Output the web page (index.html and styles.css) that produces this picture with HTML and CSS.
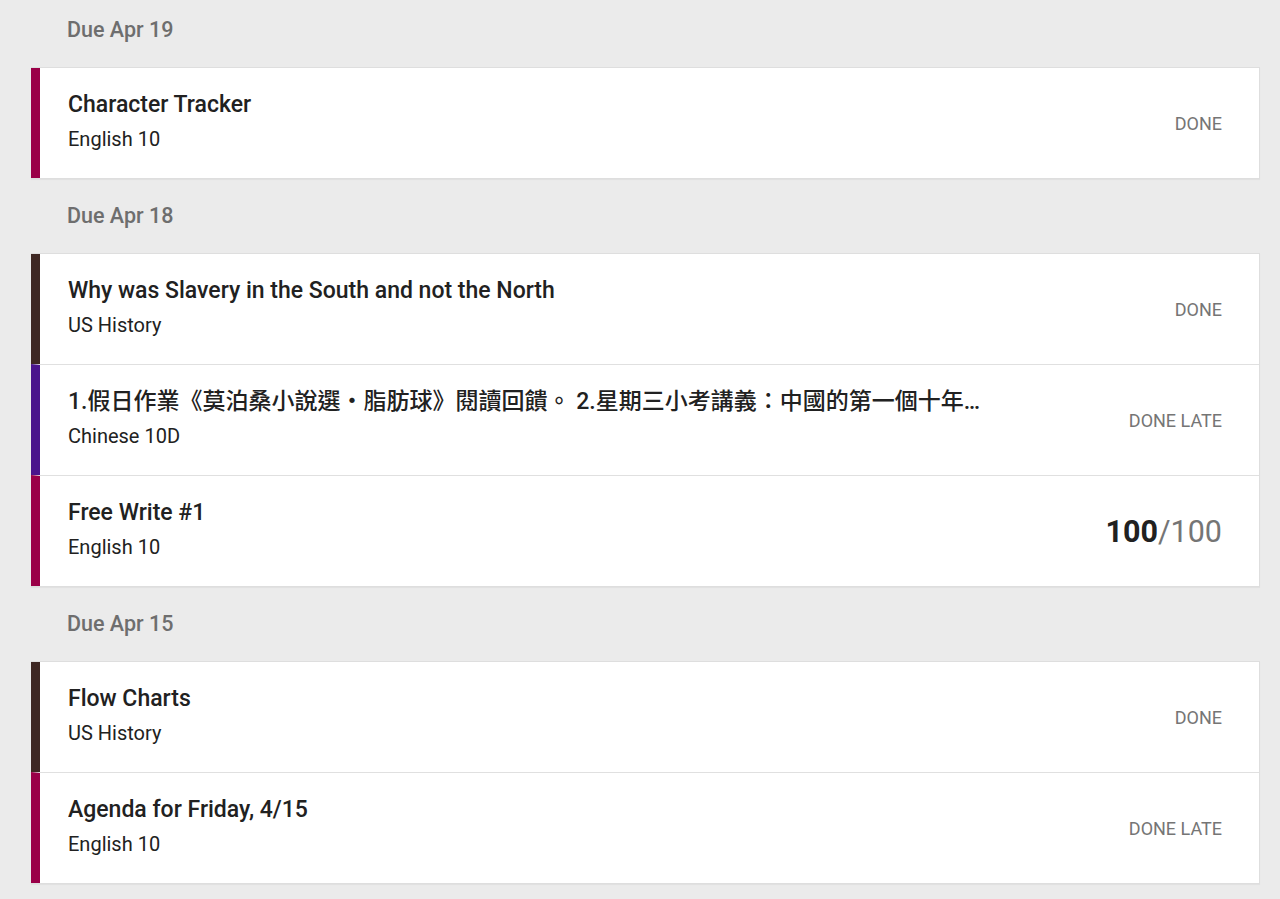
FILE: index.html
```html
<!DOCTYPE html>
<html lang="en">
<head>
<meta charset="utf-8">
<title>Assignments</title>
<link rel="stylesheet" href="styles.css">
</head>
<body>
<main class="page">
  <section class="group">
    <h2 class="day-header">Due Apr 19</h2>
    <div class="card">
      <div class="row english">
        <div class="info">
          <div class="title">Character Tracker</div>
          <div class="course">English 10</div>
        </div>
        <div class="status">DONE</div>
      </div>
    </div>
  </section>

  <section class="group">
    <h2 class="day-header">Due Apr 18</h2>
    <div class="card">
      <div class="row history">
        <div class="info">
          <div class="title">Why was Slavery in the South and not the North</div>
          <div class="course">US History</div>
        </div>
        <div class="status">DONE</div>
      </div>
      <div class="row chinese">
        <div class="info">
          <div class="title cjk">1.假日作業《莫泊桑小說選・脂肪球》閱讀回饋。 2.星期三小考講義：中國的第一個十年…</div>
          <div class="course">Chinese 10D</div>
        </div>
        <div class="status">DONE LATE</div>
      </div>
      <div class="row english">
        <div class="info">
          <div class="title">Free Write #1</div>
          <div class="course">English 10</div>
        </div>
        <div class="score"><span class="score-got">100</span>/100</div>
      </div>
    </div>
  </section>

  <section class="group">
    <h2 class="day-header">Due Apr 15</h2>
    <div class="card">
      <div class="row history">
        <div class="info">
          <div class="title">Flow Charts</div>
          <div class="course">US History</div>
        </div>
        <div class="status">DONE</div>
      </div>
      <div class="row english">
        <div class="info">
          <div class="title">Agenda for Friday, 4/15</div>
          <div class="course">English 10</div>
        </div>
        <div class="status">DONE LATE</div>
      </div>
    </div>
  </section>
</main>
</body>
</html>
```

FILE: styles.css
```css
html, body {
  margin: 0;
  padding: 0;
  background: #ebebeb;
}

body {
  font-family: Roboto, "Noto Sans CJK TC", "Liberation Sans", sans-serif;
  color: #212121;
  height: 899px;
  overflow: hidden;
}

.page {
  display: flex;
  flex-direction: column;
  padding: 0 20px 0 31px;
}

.day-header {
  margin: 0;
  padding: 25px 0 25px 36px;
  font-size: 21.5px;
  line-height: 24px;
  font-weight: 500;
  color: #6e6e6e;
}

.group:first-child .day-header {
  padding-top: 18px;
  padding-bottom: 25px;
}

.card {
  background: #fff;
  border: 1px solid #dedede;
  border-left: 0;
  box-shadow: 0 1px 1px rgba(0, 0, 0, 0.04);
}

.row {
  display: flex;
  align-items: center;
  height: 110px;
  box-sizing: border-box;
  padding: 0 37px 0 28px;
  border-left: 9px solid #9a0048;
}

.row + .row {
  border-top: 1px solid #e0e0e0;
  height: 111px;
}

.row.english { border-left-color: #9a0048; }
.row.history { border-left-color: #3e2723; }
.row.chinese { border-left-color: #4a148c; }

.info {
  flex: 1;
  min-width: 0;
  display: flex;
  flex-direction: column;
  gap: 7px;
  padding-bottom: 4px;
}

.title {
  font-size: 23px;
  line-height: 28px;
  font-weight: 500;
  white-space: nowrap;
  overflow: hidden;
  text-overflow: ellipsis;
}

.course {
  font-size: 20px;
  line-height: 26px;
  font-weight: 400;
}

.status {
  flex: none;
  font-size: 18px;
  color: #757575;
  margin-left: 40px;
}

.score {
  flex: none;
  font-size: 30.5px;
  color: #757575;
  margin-left: 40px;
}

.score-got {
  color: #212121;
  font-weight: 700;
}
```
